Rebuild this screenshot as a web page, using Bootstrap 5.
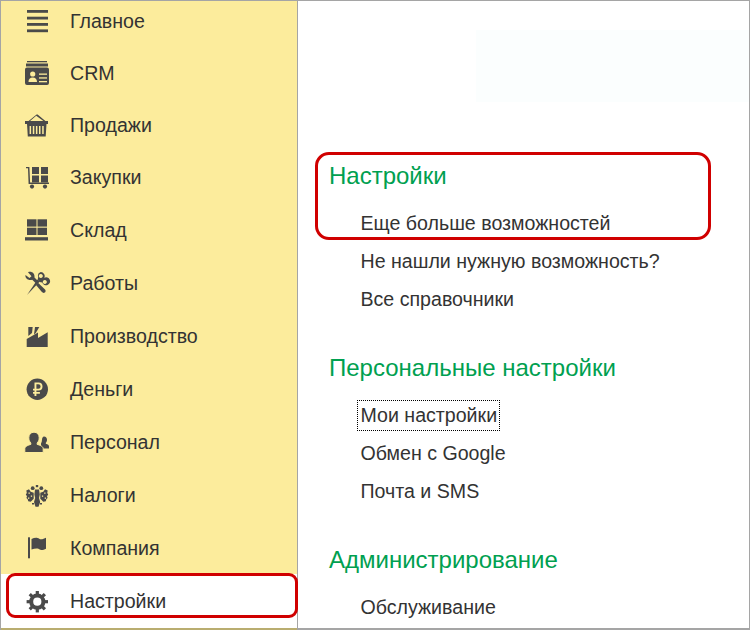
<!DOCTYPE html>
<html lang="ru">
<head>
<meta charset="utf-8">
<title>Настройки</title>
<link rel="stylesheet" href="https://cdn.jsdelivr.net/npm/bootstrap@5.3.0/dist/css/bootstrap.min.css">
<style>
html,body{margin:0;height:630px;overflow:hidden;background:#fff}
body{font-family:"Liberation Sans",Arial,sans-serif;color:#333}
.app-frame{width:750px;height:630px;border:1px solid #a5a5a5;border-bottom:0;overflow:hidden;position:relative;background:#fff}
.side-pane{width:297px;flex:none;background:#fcec9c;border-right:1px solid #a5a5a5;height:100%}
.side-item{height:53px;flex:none;font-size:19.6px;line-height:22px;color:#333;text-decoration:none;padding-left:22px}
.side-item:first-child{height:46px;padding-bottom:6px}
.side-item:nth-child(2),.side-item:nth-child(3),.side-item:nth-child(4){height:52px}
.side-item svg{width:28px;height:28px;flex:none;margin-right:19px;fill:#4a4a4a;stroke:none}
.side-item.is-current{background:#fff;flex:1 1 auto;border-bottom:2px solid #b9ad70;height:auto}
.main-pane{flex:1 1 auto;padding:162px 0 0 31px;gap:37px;border-bottom:2px solid #a5a5a5;min-width:0}
.group-title{font-size:24px;line-height:26px;color:#00a050;margin:0 0 15px;font-weight:400}
.group-links{list-style:none;margin:0;padding:0 0 0 31.5px}
.group-links li{height:38px;font-size:19.6px;line-height:23px}
.group-links a{color:#333;text-decoration:none}
.group-links a.is-focused{outline:1px dotted #000;padding:3px 2px 3px 3px;margin-left:-3px;display:inline-block}
.tint-block{position:absolute;left:475px;top:29px;width:273px;height:72px;background:#fbfefe}
.red-ring{position:absolute;border:3px solid #d00000;pointer-events:none}
.ring-side{left:5px;top:572px;width:292px;height:45px;border-radius:9px}
.ring-main{left:314px;top:151px;width:396px;height:88px;border-radius:14px}
</style>
</head>
<body>
<div class="app-frame d-flex">
  <nav class="side-pane d-flex flex-column">
    <a class="side-item d-flex align-items-center" href="#"><svg viewBox="0 0 28 28"><rect x="4" y="3" width="21" height="2.800"/><rect x="4" y="9.700" width="21" height="2.800"/><rect x="4" y="16" width="21" height="2.800"/><rect x="4" y="22.400" width="21" height="2.800"/></svg>Главное</a>
    <a class="side-item d-flex align-items-center" href="#"><svg viewBox="0 0 28 28"><rect x="4" y="2" width="20" height="1.300"/><rect x="3" y="4.500" width="22" height="3"/><path fill-rule="evenodd" d="M4 8.500h20a2 2 0 0 1 2 2V24a2 2 0 0 1-2 2H4a2 2 0 0 1-2-2V10.500a2 2 0 0 1 2-2z"/><circle cx="9.700" cy="15" r="2.600" fill="#fcec9c"/><path d="M5.500 23c0-3 1.500-4.500 4.200-4.500s4.300 1.500 4.300 4.500z" fill="#fcec9c"/><rect x="16" y="14.500" width="8" height="1.300" fill="#fcec9c"/><rect x="16" y="18.300" width="8" height="1.300" fill="#fcec9c"/><rect x="16" y="22" width="8" height="1.300" fill="#fcec9c"/></svg>CRM</a>
    <a class="side-item d-flex align-items-center" href="#"><svg viewBox="0 0 28 28"><path d="M5 10.500l8.600-7h1l8.400 7h-1.900l-7.900-5.700-6.700 5.700z"/><path fill-rule="evenodd" d="M2 10h23v3h-1.500l-.8 12.500H4.800L4 13H2zM6.600 15v8h1.500v-8zm3.200 0v8h1.500v-8zm3.100 0v8h1.500v-8zm3.100 0v8h1.500v-8zm3.200 0v8h1.500v-8z"/></svg>Продажи</a>
    <a class="side-item d-flex align-items-center" href="#"><svg viewBox="0 0 28 28"><rect x="9" y="4" width="7" height="7"/><rect x="18" y="4" width="7" height="7"/><rect x="9" y="12.500" width="7" height="7"/><rect x="18" y="12.500" width="7" height="7"/><path d="M3 4h3.400l.7 15.500H26V21H5.600L5 5.300H3z"/><circle cx="9" cy="23.600" r="2.100"/><circle cx="22" cy="23.600" r="2.100"/></svg>Закупки</a>
    <a class="side-item d-flex align-items-center" href="#"><svg viewBox="0 0 28 28"><rect x="4" y="3.300" width="9.500" height="7.300"/><rect x="14.500" y="3.300" width="9.500" height="7.300"/><rect x="4" y="11.700" width="9.500" height="7.300"/><rect x="14.500" y="11.700" width="9.500" height="7.300"/><rect x="2" y="21.200" width="23" height="3.300"/></svg>Склад</a>
    <a class="side-item d-flex align-items-center" href="#"><svg viewBox="0 0 28 28"><path d="M4 26l10.500-15.500 2.300 2z"/><path d="M13 16l2-2.200 7 6.700c1.200 1.200.4 3.400-1.400 3.400-.7 0-1.200-.3-1.700-.8z"/><path d="M2.500 6l4 3 2-1.800L5 3.200C8.300 1.800 12 4 11.500 8.500L15 12l-2.200 2.300-3.600-3.600C5.500 11.800 1.800 9.500 2.500 6z"/><path fill-rule="evenodd" d="M17.800 3a4 4 0 0 1 3.500 5.700 4 4 0 1 1-2 4.800l-2.800-.5-1.800-2.300.5-2.700A4 4 0 0 1 17.800 3zm0 2a2 2 0 1 0 .01 0zm4 6a2 2 0 1 0 .01 0z"/></svg>Работы</a>
    <a class="side-item d-flex align-items-center" href="#"><svg viewBox="0 0 28 28"><path d="M5.300 5h4.400L9 11l-3.700 3z"/><path d="M12 5h4.300l-3.500 6-1.800 1.400z"/><path d="M3.700 25V17L15 10.500V16l9.700-5.700V25z"/></svg>Производство</a>
    <a class="side-item d-flex align-items-center" href="#"><svg viewBox="0 0 28 28"><circle cx="14.300" cy="14.300" r="10.700"/><path fill="#fcec9c" fill-rule="evenodd" d="M11.500 7.500h4a4 4 0 0 1 0 8h-2.100v1.500h3.500v1.700h-3.500V21h-1.900v-2.300H10V17h1.500v-1.500H10v-1.800h1.500zm1.900 1.800v4.400h2a2.200 2.200 0 0 0 0-4.400z"/></svg>Деньги</a>
    <a class="side-item d-flex align-items-center" href="#"><svg viewBox="0 0 28 28"><path d="M21 8.500c1.900 0 3 1.500 3 3.300 0 1.300-.5 2.400-1.200 3v1c2 .6 3.200 1.300 3.200 2.600v2.100h-8v-5c.6-1 1-2.300 1-3.700 0-1.700.9-3.300 2-3.300z"/><path stroke="#fcec9c" stroke-width="1" d="M11 4.200c3.200 0 5.200 2.300 5.200 5.600 0 2.100-.8 4-2 5.100v1.500c3.600 1 6 2.300 6 4.300v3.800H1.800v-3.800c0-2 2.500-3.300 6-4.300v-1.500c-1.200-1.100-2-3-2-5.100 0-3.300 2-5.600 5.200-5.600z"/></svg>Персонал</a>
    <a class="side-item d-flex align-items-center" href="#"><svg viewBox="0 0 28 28"><rect x="12.800" y="4" width="2.400" height="2.200"/><circle cx="9.700" cy="7.200" r="1.900"/><circle cx="18.300" cy="7.200" r="1.900"/><path d="M3.300 9.500l2.700-1.300 1.700 2.500 3 1v6l-3 3-2.500-.5-.5-2-1.300-1.200.6-1.700-1.200-1.800 1-1.500z"/><path d="M24.700 9.500L22 8.200l-1.700 2.500-3 1v6l3 3 2.500-.5.500-2 1.300-1.200-.6-1.700 1.200-1.800-1-1.500z"/><path d="M12 8.500h4l.8 5-.8 3.500 1.200 4-1.700 4.700h-3L11 21l1.200-4-.8-3.500z"/><rect x="5.500" y="11.500" width="1.300" height="1.300" fill="#fcec9c"/><rect x="21.200" y="11.500" width="1.300" height="1.300" fill="#fcec9c"/><rect x="7.800" y="14.500" width="1.300" height="1.300" fill="#fcec9c"/><rect x="18.900" y="14.500" width="1.300" height="1.300" fill="#fcec9c"/><rect x="5" y="16.500" width="1.300" height="1.300" fill="#fcec9c"/><rect x="21.700" y="16.500" width="1.300" height="1.300" fill="#fcec9c"/><rect x="9" y="22" width="2" height="1.500"/><rect x="17" y="22" width="2" height="1.500"/></svg>Налоги</a>
    <a class="side-item d-flex align-items-center" href="#"><svg viewBox="0 0 28 28"><rect x="5" y="3.300" width="2" height="21"/><path d="M8.500 5c2-.8 4-1.400 6-1 1.500.3 2 1.300 3.500 1.300 1.700 0 3.500-.7 5-1.500v11c-1.700 1-3.500 1.300-5 1.200-1.700-.2-2-1.300-3.500-1.400-2-.2-4 .4-6 1z"/></svg>Компания</a>
    <a class="side-item is-current d-flex align-items-center" href="#"><svg viewBox="0 0 28 28"><g transform="translate(14.300 14.700)"><circle r="6.100" fill="none" stroke="#4a4a4a" stroke-width="4"/><rect x="-1.600" y="-10.700" width="3.200" height="4"/><rect x="-1.600" y="-10.700" width="3.200" height="4" transform="rotate(45)"/><rect x="-1.600" y="-10.700" width="3.200" height="4" transform="rotate(90)"/><rect x="-1.600" y="-10.700" width="3.200" height="4" transform="rotate(135)"/><rect x="-1.600" y="-10.700" width="3.200" height="4" transform="rotate(180)"/><rect x="-1.600" y="-10.700" width="3.200" height="4" transform="rotate(225)"/><rect x="-1.600" y="-10.700" width="3.200" height="4" transform="rotate(270)"/><rect x="-1.600" y="-10.700" width="3.200" height="4" transform="rotate(315)"/></g></svg>Настройки</a>
  </nav>
  <main class="main-pane d-flex flex-column">
    <section>
      <h2 class="group-title">Настройки</h2>
      <ul class="group-links">
        <li class="d-flex align-items-center"><a href="#">Еще больше возможностей</a></li>
        <li class="d-flex align-items-center"><a href="#">Не нашли нужную возможность?</a></li>
        <li class="d-flex align-items-center"><a href="#">Все справочники</a></li>
      </ul>
    </section>
    <section>
      <h2 class="group-title">Персональные настройки</h2>
      <ul class="group-links">
        <li class="d-flex align-items-center"><a class="is-focused" href="#">Мои настройки</a></li>
        <li class="d-flex align-items-center"><a href="#">Обмен с Google</a></li>
        <li class="d-flex align-items-center"><a href="#">Почта и SMS</a></li>
      </ul>
    </section>
    <section>
      <h2 class="group-title">Администрирование</h2>
      <ul class="group-links">
        <li class="d-flex align-items-center"><a href="#">Обслуживание</a></li>
      </ul>
    </section>
  </main>
  <div class="tint-block"></div>
  <div class="red-ring ring-side"></div>
  <div class="red-ring ring-main"></div>
</div>
<script src="https://cdn.jsdelivr.net/npm/bootstrap@5.3.0/dist/js/bootstrap.bundle.min.js"></script>
</body>
</html>
